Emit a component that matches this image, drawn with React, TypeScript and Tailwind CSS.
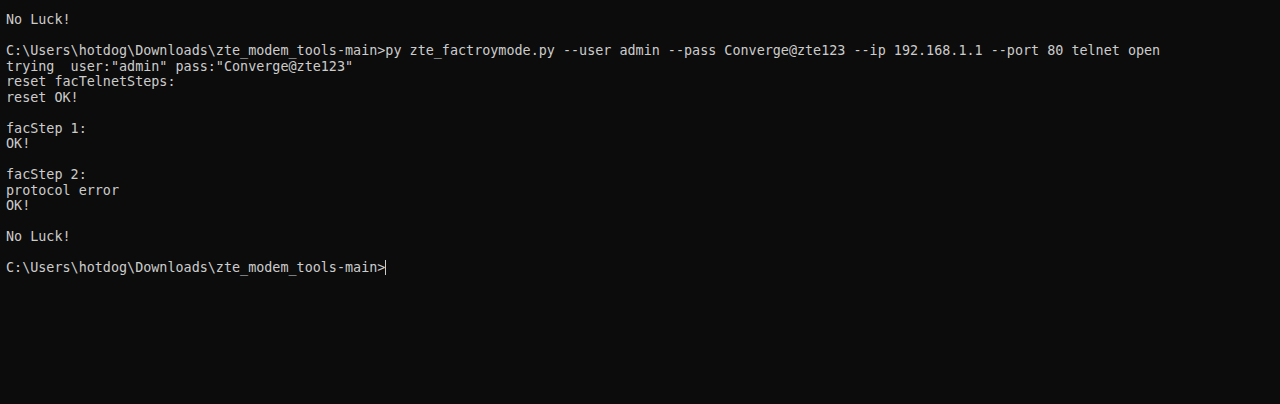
import React from 'react'

const lines = [
  'No Luck!',
  '',
  'C:\\Users\\hotdog\\Downloads\\zte_modem_tools-main>py zte_factroymode.py --user admin --pass Converge@zte123 --ip 192.168.1.1 --port 80 telnet open',
  'trying  user:"admin" pass:"Converge@zte123"',
  'reset facTelnetSteps:',
  'reset OK!',
  '',
  'facStep 1:',
  'OK!',
  '',
  'facStep 2:',
  'protocol error',
  'OK!',
  '',
  'No Luck!',
  '',
]

function App() {
  return (
    <div className="w-[1280px] h-[404px] bg-[#0c0c0c] text-[#cccccc] pt-[12px] pl-[6px] overflow-hidden font-['DejaVu_Sans_Mono',monospace] text-[13.42px] leading-[15.5px]">
      {lines.map((line, i) => (
        <div key={i} className="h-[15.5px] whitespace-pre">
          {line}
        </div>
      ))}
      <div className="h-[15.5px] whitespace-pre flex items-center">
        <span>C:\Users\hotdog\Downloads\zte_modem_tools-main&gt;</span>
        <span className="inline-block w-px h-[15px] bg-[#cccccc]" />
      </div>
    </div>
  )
}

export default App
